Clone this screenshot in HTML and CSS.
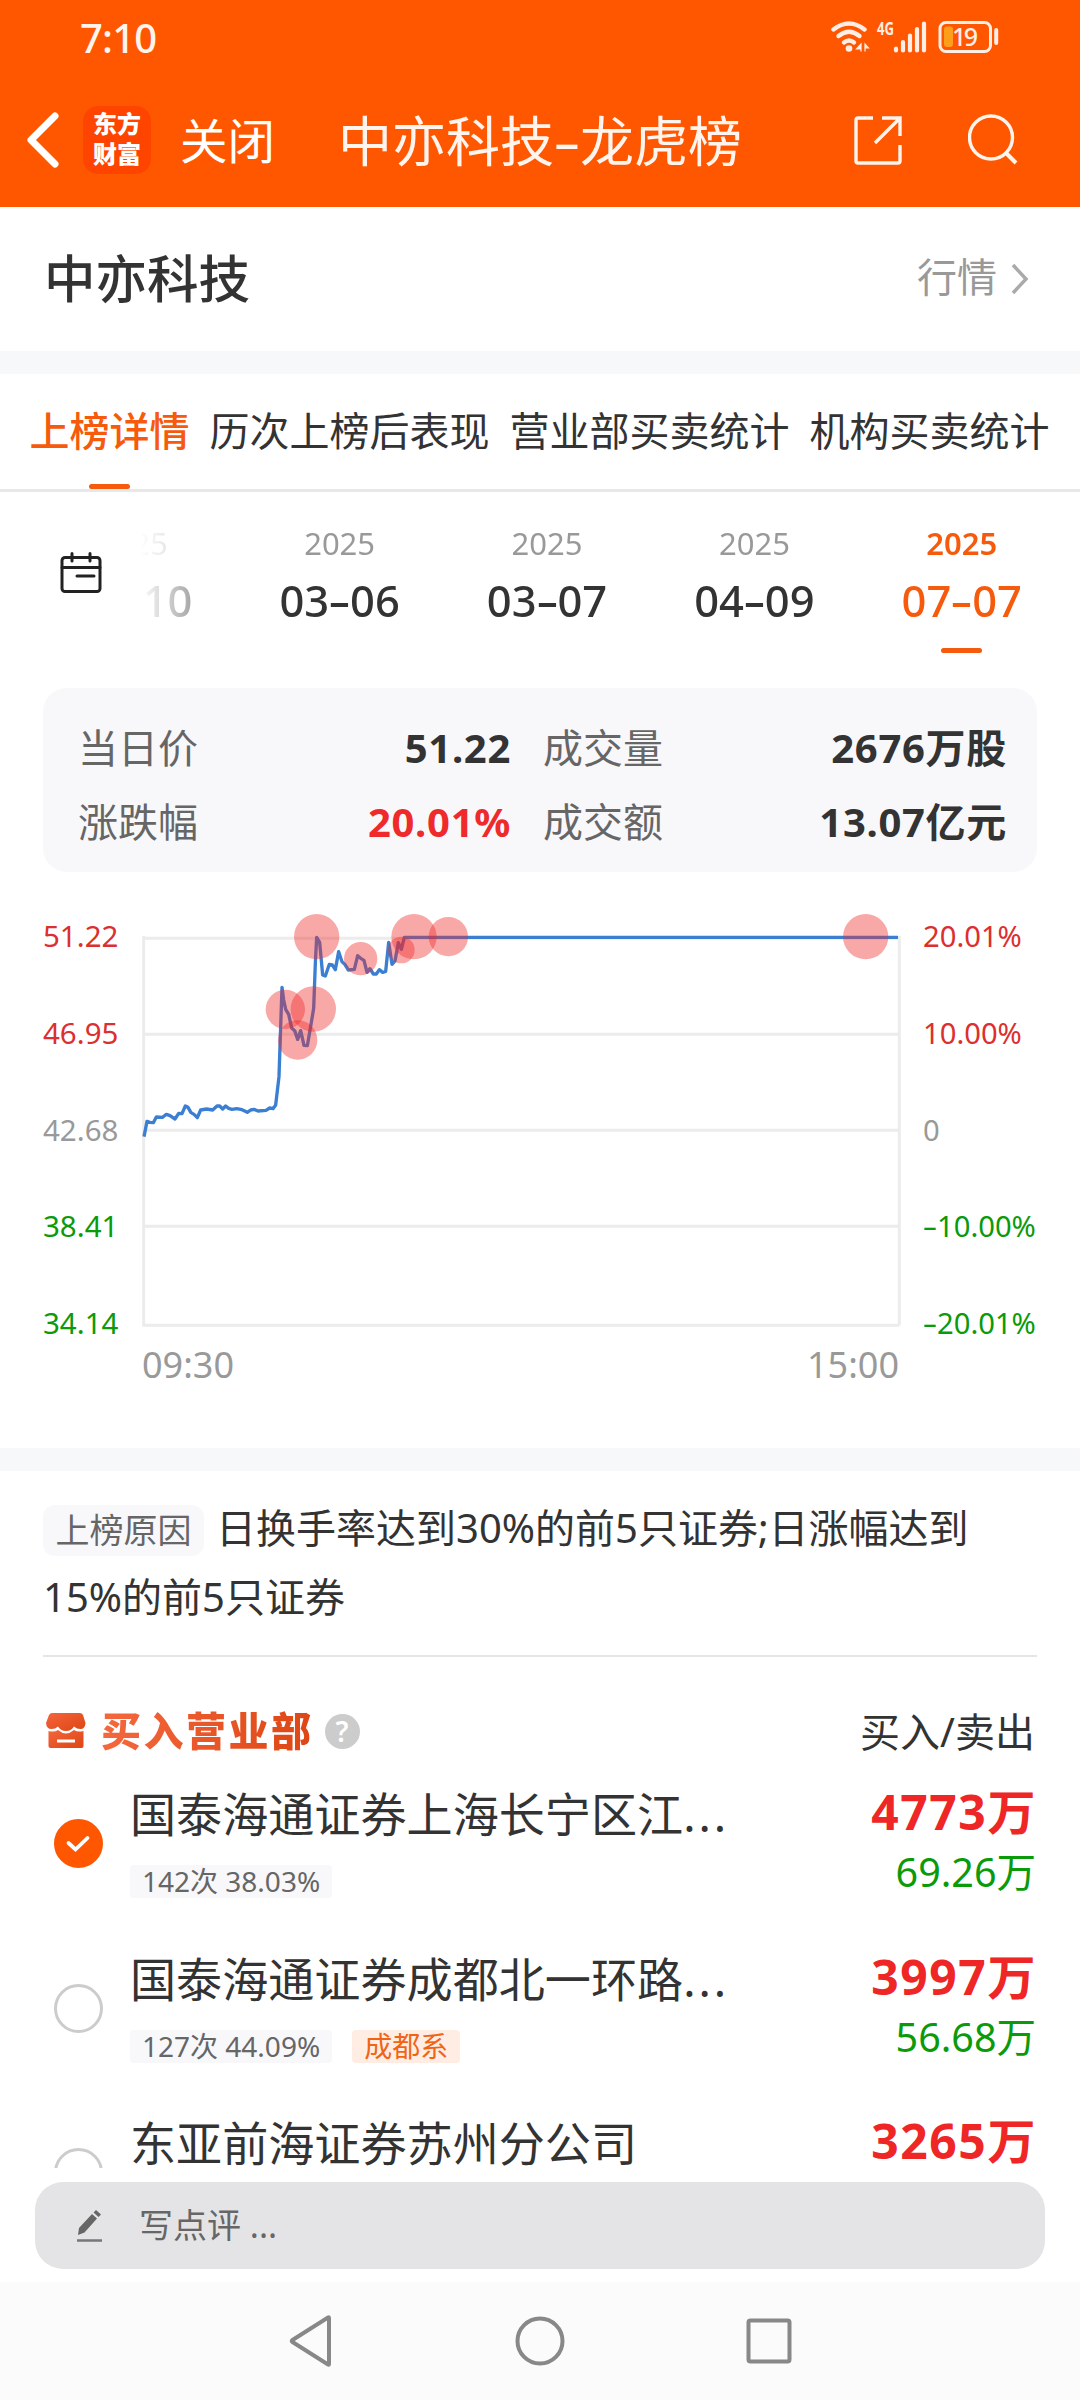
FILE: index.html
```html
<!DOCTYPE html>
<html lang="zh-CN">

<head>
    <meta charset="UTF-8">
    <meta name="viewport" content="width=device-width, initial-scale=1.0">
    <title>中亦科技-龙虎榜</title>
    <link rel="stylesheet" href="styles.css">
</head>

<body>
    <header class="header">
        <div class="status-bar">
            <span class="time">7:10</span>
            <svg class="status-icons" width="170" height="36" viewBox="830 18 170 36">
                <g fill="none" stroke="#ffeee6" stroke-width="4.4" stroke-linecap="round">
                    <path d="M833.5 29.500Q849 17.500 864.500 29.500" />
                    <path d="M838.500 36Q849 27.500 859.500 36" />
                    <path d="M844 42.500Q849 38.500 854 42.500" />
                </g>
                <circle cx="849" cy="48.500" r="3.300" fill="#ffeee6" />
                <path d="M861 44v7.500V44l-4.500 5h4.500M865 51.500V44l3.500 4h-3.500" fill="#ffeee6" stroke="#ffeee6" stroke-width="1.200" />
                <text x="877" y="34.500" class="net" textLength="17" lengthAdjust="spacingAndGlyphs">4G</text>
                <path d="M896 48.500v2M903 42v8.500M910 35.500v15M917 29v21.500M924 23.500v27" stroke="#ffeee6" stroke-width="4.200" stroke-linecap="round" />
                <rect x="940" y="22.500" width="50.500" height="29" rx="6" fill="none" stroke="#ffeee6" stroke-width="3" />
                <rect x="944" y="26.500" width="9" height="20.500" rx="3" fill="#ff9e1b" />
                <path d="M996.200 30v13" stroke="#ffeee6" stroke-width="4" stroke-linecap="round" />
                <text x="952" y="46" class="battery" textLength="26">19</text>
            </svg>
        </div>
        <div class="nav-bar">
            <svg class="back" width="34" height="56" viewBox="0 0 34 56">
                <path d="M30 4L6 28L30 52" fill="none" stroke="#fff" stroke-width="7" stroke-linecap="round" stroke-linejoin="round" />
            </svg>
            <div class="logo">东方<br>财富</div>
            <span class="close">关闭</span>
            <h1 class="nav-title">中亦科技<span class="dash">-</span>龙虎榜</h1>
            <svg class="share" width="48" height="49" viewBox="0 0 48 49">
                <path d="M19 2H4Q2 2 2 4V45Q2 47 4 47H44Q46 47 46 45V29M28 2H46V20M45 3L21 27" fill="none" stroke="#fff4ee" stroke-width="3.400" />
            </svg>
            <svg class="search" width="50" height="52" viewBox="0 0 50 52">
                <circle cx="23" cy="23.500" r="21.500" fill="none" stroke="#fff4ee" stroke-width="3.400" />
                <path d="M38 39L48 49" stroke="#fff4ee" stroke-width="4" />
            </svg>
        </div>
    </header>

    <section class="stock">
        <h2>中亦科技</h2>
        <a class="quote" href="#">行情
            <svg width="20" height="32" viewBox="0 0 20 32">
                <path d="M3 2L16 16L3 30" fill="none" stroke="#aaa" stroke-width="3.500" />
            </svg>
        </a>
    </section>

    <nav class="tabs">
        <div class="tab active">上榜详情</div>
        <div class="tab">历次上榜后表现</div>
        <div class="tab">营业部买卖统计</div>
        <div class="tab">机构买卖统计</div>
    </nav>

    <section class="dates">
        <svg class="calendar" width="42" height="42" viewBox="0 0 42 42">
            <g fill="none" stroke="#222" stroke-width="3" stroke-linecap="round">
                <rect x="2" y="5.500" width="38" height="34" rx="3" />
                <path d="M2 15.500H40M12 1.500V9M30 1.500V9M17 24H34" />
            </g>
        </svg>
        <div class="date-list">
            <div class="date"><span>2025</span><b>02<i class="dash">-</i>10</b></div>
            <div class="date"><span>2025</span><b>03<i class="dash">-</i>06</b></div>
            <div class="date"><span>2025</span><b>03<i class="dash">-</i>07</b></div>
            <div class="date"><span>2025</span><b>04<i class="dash">-</i>09</b></div>
            <div class="date active"><span>2025</span><b>07<i class="dash">-</i>07</b></div>
        </div>
    </section>

    <section class="summary">
        <div class="item"><span>当日价</span><b>51.22</b></div>
        <div class="item"><span>成交量</span><b>2676万股</b></div>
        <div class="item"><span>涨跌幅</span><b class="up">20.01%</b></div>
        <div class="item"><span>成交额</span><b>13.07亿元</b></div>
    </section>

    <section class="chart">
        <div class="axis">
            <span class="up">51.22</span>
            <span class="up">46.95</span>
            <span>42.68</span>
            <span class="down">38.41</span>
            <span class="down">34.14</span>
        </div>
        <div class="plot">
            <svg width="760" height="440" viewBox="66 30 2280 1320">
                <path d="M71 138V1306M2338 138V1306M67 145H2338M67 433H2338M67 721H2338M67 1009H2338M67 1306H2338" stroke="#ececec" stroke-width="9" />
                <polyline class="price" points="72,740 81,694 90,697 100,698 109,681 128,682 139,673 150,677 165,687 176,670 186,671 196,648 204,652 213,668 222,673 232,683 242,660 260,657 278,660 291,648 299,648 308,657 317,648 326,655 336,658 350,656 366,659 382,667 392,660 402,658 414,663 438,661 449,654 459,656 467,645 477,560 481,440 486,292 491,330 497,358 506,373 515,414 524,422 533,448 542,422 552,466 562,467 571,415 581,355 586,220 590,142 599,157 608,255 616,258 628,223 637,225 646,239 656,185 666,215 675,224 685,240 703,238 713,197 722,205 732,211 741,247 750,236 760,252 769,252 778,239 788,247 797,244 806,157 816,223 825,213 835,158 844,178 853,142 2334,142" />
                <g class="bubbles">
                    <circle cx="590" cy="140" r="68" />
                    <circle cx="496" cy="358" r="59" />
                    <circle cx="580" cy="357" r="68" />
                    <circle cx="533" cy="450" r="59" />
                    <circle cx="722" cy="206" r="50" />
                    <circle cx="844" cy="180" r="40" />
                    <circle cx="882" cy="140" r="68" />
                    <circle cx="985" cy="140" r="59" />
                    <circle cx="2237" cy="140" r="68" />
                </g>
            </svg>
            <div class="hours"><span>09:30</span><span>15:00</span></div>
        </div>
        <div class="axis">
            <span class="up">20.01%</span>
            <span class="up">10.00%</span>
            <span>0</span>
            <span class="down"><i class="dash">-</i>10.00%</span>
            <span class="down"><i class="dash">-</i>20.01%</span>
        </div>
    </section>

    <section class="detail">
        <p class="reason"><span class="reason-tag">上榜原因</span>日换手率达到30%的前5只证券;日涨幅达到<br>15%的前5只证券</p>
        <div class="list-head">
            <svg width="42" height="36" viewBox="0 0 42 36">
                <defs>
                    <linearGradient id="shop" x1="0" y1="0" x2="1" y2="1">
                        <stop offset="0" stop-color="#f4643c" />
                        <stop offset="1" stop-color="#de4614" />
                    </linearGradient>
                </defs>
                <path d="M7 0H35Q37 0 38 2L40.500 10Q40 16 35.500 16Q31.500 16 29 13.500Q26 18 21 18Q16 18 13 13.500Q10.500 16 6.500 16Q1.500 16 1 10L4 2Q5 0 7 0Z" fill="url(#shop)" />
                <path d="M3.500 18Q9.500 19.500 13 17Q17 20.500 21 20.500Q25 20.500 29 17Q32.500 19.500 38.500 18V33Q38.500 35 36.500 35H5.500Q3.500 35 3.500 33ZM12 26.500V29.500H30V26.500Z" fill="url(#shop)" fill-rule="evenodd" />
            </svg>
            <h3>买入营业部</h3>
            <span class="help">?</span>
            <span class="head-right">买入/卖出</span>
        </div>
        <ul class="list">
            <li>
                <span class="radio checked">
                    <svg width="26" height="20" viewBox="0 0 26 20">
                        <path d="M3.500 9L10.500 15.500L22.500 4" fill="none" stroke="#fff" stroke-width="3.800" stroke-linecap="round" />
                    </svg>
                </span>
                <div class="info">
                    <div class="name">国泰海通证券上海长宁区江<em>...</em></div>
                    <div class="labels"><span>142次 38.03%</span></div>
                </div>
                <div class="amount"><b>4773万</b><span>69.26万</span></div>
            </li>
            <li>
                <span class="radio"></span>
                <div class="info">
                    <div class="name">国泰海通证券成都北一环路<em>...</em></div>
                    <div class="labels"><span>127次 44.09%</span><span class="hot">成都系</span></div>
                </div>
                <div class="amount"><b>3997万</b><span>56.68万</span></div>
            </li>
            <li>
                <span class="radio"></span>
                <div class="info">
                    <div class="name">东亚前海证券苏州分公司</div>
                </div>
                <div class="amount"><b>3265万</b></div>
            </li>
        </ul>
    </section>

    <div class="comment">
        <svg width="28" height="34" viewBox="0 0 28 34">
            <path d="M2 26L3 19L16 5L21 9.500L8.500 23.500ZM17.500 3.500L20 1L25 5.500L22.500 8Z" fill="#666" />
            <path d="M1 31.500H26" stroke="#777" stroke-width="2.500" />
        </svg>
        <span>写点评 ...</span>
    </div>

    <footer class="system-nav">
        <svg width="46" height="54" viewBox="0 0 46 54">
            <path d="M41 4V50Q41 51 40 50.500L4.500 28Q3 27 4.500 26L40 3.500Q41 3 41 4Z" fill="none" stroke="#888" stroke-width="4" />
        </svg>
        <svg width="50" height="50" viewBox="0 0 50 50">
            <circle cx="25" cy="25" r="22.500" fill="none" stroke="#888" stroke-width="4" />
        </svg>
        <svg width="46" height="46" viewBox="0 0 46 46">
            <rect x="2.500" y="2.500" width="41" height="41" rx="2" fill="none" stroke="#888" stroke-width="4" />
        </svg>
    </footer>
</body>

</html>
```
FILE: styles.css
```css
* {
    box-sizing: border-box;
}

body {
    width: 1080px;
    height: 2400px;
    margin: 0;
    overflow: hidden;
    display: flex;
    flex-direction: column;
    font-family: "Noto Sans", "Noto Sans CJK SC", sans-serif;
    font-size: 40px;
    color: #333;
    background-color: #fff;
}

h1,
h2,
h3,
p,
ul {
    margin: 0;
    padding: 0;
}

svg {
    display: block;
    flex-shrink: 0;
}

.dash {
    display: inline-block;
    width: 0.48em;
    text-align: center;
    font-style: normal;
    transform: scaleX(1.6);
}

.up {
    color: #ee2a2a;
}

.down {
    color: #0a9a0a;
}

/* header */
.header {
    flex: none;
    height: 207px;
    background-color: #ff5700;
    color: #fff4ee;
}

.status-bar {
    display: flex;
    justify-content: space-between;
    height: 72px;
    padding: 18px 80px 0 80px;
}

.time {
    font-size: 40px;
    line-height: 40px;
    font-weight: 500;
    letter-spacing: -0.8px;
}

.net {
    font-size: 18px;
    font-weight: 700;
    fill: #ffeee6;
}

.battery {
    font-size: 25px;
    font-weight: 500;
    fill: #ffeee6;
}

.nav-bar {
    display: flex;
    align-items: center;
    height: 136px;
    padding-left: 25px;
}

.logo {
    width: 68px;
    height: 68px;
    padding-top: 3px;
    margin-left: 24px;
    border-radius: 15px;
    background-color: #ff4400;
    color: #fff;
    font-size: 24px;
    line-height: 30px;
    font-weight: 900;
    text-align: center;
}

.close {
    margin: 0 0 4px 29px;
    font-size: 47.5px;
    color: #fff;
}

.nav-title {
    margin: 0 0 3px 63px;
    font-size: 54px;
    font-weight: 400;
    white-space: nowrap;
}

.share {
    margin-left: 112px;
}

.search {
    margin-left: 66px;
}

/* stock name */
.stock {
    flex: none;
    display: flex;
    justify-content: space-between;
    align-items: center;
    height: 144px;
    padding: 0 50px 8px 44px;
}

.stock h2 {
    font-size: 51.5px;
    font-weight: 500;
}

.quote {
    display: flex;
    align-items: center;
    gap: 13px;
    color: #999;
    text-decoration: none;
}

.quote svg {
    margin-top: 7px;
}

/* tabs */
.tabs {
    flex: none;
    display: flex;
    gap: 20px;
    height: 141px;
    padding-left: 29.5px;
    border-top: 23px solid #f7f8fa;
    border-bottom: 3px solid #e8e8e8;
    line-height: 114px;
    white-space: nowrap;
}

.tab.active {
    position: relative;
    color: #f65a0c;
    font-weight: 500;
}

.tab.active::after,
.date.active::after {
    content: "";
    position: absolute;
    left: 50%;
    bottom: 0;
    width: 41px;
    height: 5px;
    margin-left: -20.5px;
    border-radius: 3px;
    background-color: #f65a0c;
}

/* dates */
.dates {
    flex: none;
    display: flex;
    height: 196px;
}

.calendar {
    margin: 60px 0 0 60px;
}

.date-list {
    display: flex;
    justify-content: flex-end;
    width: 929.5px;
    margin-left: 34px;
    height: 161px;
    overflow: hidden;
    -webkit-mask-image: linear-gradient(to right, transparent 3px, #000 125px);
    mask-image: linear-gradient(to right, transparent 3px, #000 125px);
}

.date {
    flex: none;
    position: relative;
    display: flex;
    flex-direction: column;
    align-items: center;
    width: 207.4px;
    padding-top: 31px;
}

.date span {
    font-size: 31px;
    line-height: 41px;
    color: #999;
}

.date b {
    margin-top: 7px;
    font-size: 43.5px;
    line-height: 58px;
    font-weight: 500;
}

.date.active span,
.date.active b {
    color: #f65a0c;
}

.date.active span {
    font-weight: 600;
}

/* summary box */
.summary {
    flex: none;
    display: grid;
    grid-template-columns: 433px 464px;
    grid-template-rows: 74px 74px;
    column-gap: 32px;
    align-items: center;
    height: 184px;
    margin: 0 43px;
    padding: 21px 30px 15px 35px;
    border-radius: 24px;
    background-color: #f8f8fb;
}

.item {
    display: flex;
    justify-content: space-between;
    align-items: baseline;
}

.item span {
    color: #666;
}

.item b {
    letter-spacing: 0.7px;
}

/* price chart */
.chart {
    flex: none;
    display: flex;
    height: 576px;
    padding-left: 43px;
}

.axis {
    display: flex;
    flex-direction: column;
    justify-content: space-between;
    width: 99px;
    height: 417px;
    margin-top: 49px;
    font-size: 29.5px;
    line-height: 30px;
    color: #999;
    white-space: nowrap;
}

.plot {
    width: 760px;
    padding-top: 28px;
}

.plot + .axis {
    margin-left: 21px;
    width: 130px;
    font-size: 29.2px;
}

.axis .up {
    color: #dc2f2f;
}

.price {
    fill: none;
    stroke: #3b7fd2;
    stroke-width: 10;
    stroke-linejoin: round;
}

.bubbles {
    fill: rgba(240, 38, 38, 0.4);
}

.hours {
    display: flex;
    justify-content: space-between;
    padding-right: 3px;
    font-size: 36px;
    line-height: 50px;
    color: #999;
}

/* reason */
.detail {
    flex: none;
    height: 720px;
    padding: 0 43px;
    border-top: 23px solid #f7f8fa;
    overflow: hidden;
}

.reason {
    height: 186px;
    padding-top: 22px;
    line-height: 69px;
    border-bottom: 2px solid #e5e5e5;
    white-space: nowrap;
}

.reason-tag {
    display: inline-block;
    width: 161px;
    height: 51px;
    margin-right: 12px;
    border-radius: 12px;
    background-color: #f8f8fb;
    color: #666;
    font-size: 34px;
    line-height: 51px;
    text-align: center;
}

/* buy list */
.list-head {
    display: flex;
    align-items: center;
    height: 110px;
    padding: 38px 0 0 2px;
}

.list-head h3 {
    margin-left: 14px;
    font-size: 40px;
    line-height: 50px;
    font-weight: 900;
    letter-spacing: 2.5px;
    background: linear-gradient(to right, #f4683e, #de4614);
    -webkit-background-clip: text;
    background-clip: text;
    color: transparent;
}

.help {
    width: 35px;
    height: 35px;
    margin-left: 11px;
    border-radius: 50%;
    background-color: #ccc;
    color: #fff;
    font-size: 28px;
    line-height: 35px;
    font-weight: 600;
    text-align: center;
}

.head-right {
    margin: 0 2px 3px auto;
}

.list {
    list-style: none;
}

.list li {
    display: flex;
    height: 164.5px;
}

.radio {
    flex: none;
    display: flex;
    align-items: center;
    justify-content: center;
    width: 49px;
    height: 49px;
    margin: 52px 0 0 10.5px;
    border: 3px solid #ccc;
    border-radius: 50%;
}

.radio.checked {
    border-color: #ff5700;
    background-color: #ff5700;
}

.info {
    margin: 18px 0 0 27.5px;
}

.name {
    font-size: 46.1px;
    line-height: 60px;
    white-space: nowrap;
}

.name em {
    font-style: normal;
    letter-spacing: 3px;
}

.labels {
    display: flex;
    gap: 20px;
    margin-top: 20px;
}

.labels span {
    height: 33px;
    padding: 0 12px;
    border-radius: 4px;
    background-color: #f8f8fb;
    color: #666;
    font-size: 28px;
    line-height: 33px;
    white-space: nowrap;
}

.labels .hot {
    background-color: #ffede4;
    color: #f06414;
}

.amount {
    display: flex;
    flex-direction: column;
    align-items: flex-end;
    margin-left: auto;
    padding: 14px 1px 0 0;
}

.amount b {
    color: #ee2626;
    font-size: 48px;
    line-height: 62px;
    letter-spacing: 1.6px;
    margin-right: -1px;
}

.amount span {
    color: #0a9a0a;
    font-size: 39.5px;
    line-height: 58px;
}

/* comment input */
.comment {
    flex: none;
    display: flex;
    align-items: center;
    height: 87px;
    margin: 14px 35px 13px;
    padding-left: 41px;
    border-radius: 28px;
    background-color: #e4e4e6;
    color: #666;
    font-size: 34px;
}

.comment span {
    margin: 0 0 4px 35px;
}

.system-nav {
    flex: none;
    display: flex;
    justify-content: center;
    align-items: center;
    gap: 181px;
    height: 118px;
    background-color: #fbfbfb;
}
```
